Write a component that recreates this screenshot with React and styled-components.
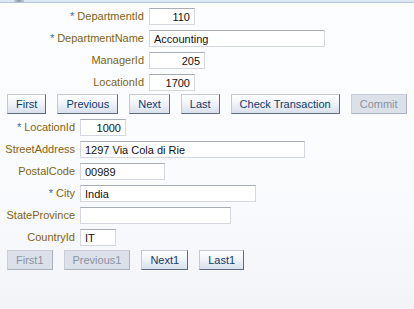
import React from 'react'
import styled, { createGlobalStyle } from 'styled-components'

const Global = createGlobalStyle`
  html, body {
    margin: 0;
    padding: 0;
  }
  body {
    width: 414px;
    height: 309px;
    overflow: hidden;
    background: linear-gradient(#fcfdfe 0%, #fafbfd 60%, #f2f4f8 100%);
    font-family: "Liberation Sans", Arial, sans-serif;
    font-size: 11px;
  }
`

const Page = styled.div`
  display: flex;
  flex-direction: column;
  height: 309px;
`

const TopBar = styled.div`
  display: flex;
  height: 2px;
  background: #dde7f4;
  border-bottom: 1px solid #b4c5dd;
`

const TopTab = styled.span`
  margin-left: 14px;
  width: 10px;
  height: 2px;
  background: linear-gradient(90deg, #c5ccd6, #8d97a5, #c5ccd6);
`

const Form = styled.div`
  display: grid;
  grid-template-columns: ${({ $labelWidth }) => $labelWidth}px auto;
  column-gap: 5px;
  row-gap: 5px;
  margin-top: 5px;
  justify-items: start;
  align-items: center;
`

const Label = styled.label`
  justify-self: end;
  color: #7f6412;
  white-space: nowrap;
  line-height: 17px;
`

const Req = styled.span`
  color: #3a68b0;
  margin-right: 3px;
`

const Field = styled.input`
  box-sizing: border-box;
  width: ${({ $w }) => $w}px;
  height: 17px;
  margin: 0;
  padding: 0 4px;
  border: 1px solid #d4d8de;
  border-top-color: #a7adb6;
  background: #fff;
  color: #111;
  font-family: "Liberation Sans", Arial, sans-serif;
  font-size: 11px;
  text-align: ${({ $num }) => ($num ? 'right' : 'left')};
  outline: none;
`

const Buttons = styled.div`
  display: flex;
  gap: 11px;
  padding-left: 7px;
  margin-top: ${({ $top }) => $top}px;
`

const Button = styled.button`
  box-sizing: border-box;
  height: 20px;
  margin: 0;
  padding: 0 8px;
  font-family: "Liberation Sans", Arial, sans-serif;
  font-size: 11px;
  color: #0f3a6c;
  background: linear-gradient(#ffffff 0%, #f1f4f9 45%, #d9e0ec 100%);
  border: 1px solid #c3cad5;
  border-right-color: #5f6b7c;
  border-bottom-color: #5f6b7c;
  cursor: pointer;

  &:disabled {
    color: #8893a4;
    background: #dce0e9;
    border-color: #c9ced8;
    border-right-color: #a9b1be;
    border-bottom-color: #a9b1be;
    cursor: default;
  }
`

const deptRows = [
  { label: 'DepartmentId', req: true, value: '110', w: 46, num: true },
  { label: 'DepartmentName', req: true, value: 'Accounting', w: 176 },
  { label: 'ManagerId', value: '205', w: 56, num: true },
  { label: 'LocationId', value: '1700', w: 46, num: true },
]

const locRows = [
  { label: 'LocationId', req: true, value: '1000', w: 46, num: true },
  { label: 'StreetAddress', value: '1297 Via Cola di Rie', w: 225 },
  { label: 'PostalCode', value: '00989', w: 85 },
  { label: 'City', req: true, value: 'India', w: 176 },
  { label: 'StateProvince', value: '', w: 151 },
  { label: 'CountryId', value: 'IT', w: 36 },
]

const FormRows = ({ rows, labelWidth }) => (
  <Form $labelWidth={labelWidth}>
    {rows.map((r) => (
      <React.Fragment key={r.label}>
        <Label>
          {r.req && <Req>*</Req>}
          {r.label}
        </Label>
        <Field $w={r.w} $num={r.num} defaultValue={r.value} />
      </React.Fragment>
    ))}
  </Form>
)

const App = () => {
  return (
    <Page>
      <Global />
      <TopBar>
        <TopTab />
      </TopBar>

      <FormRows rows={deptRows} labelWidth={144} />

      <Buttons $top={3}>
        <Button>First</Button>
        <Button>Previous</Button>
        <Button>Next</Button>
        <Button>Last</Button>
        <Button>Check Transaction</Button>
        <Button disabled>Commit</Button>
      </Buttons>

      <FormRows rows={locRows} labelWidth={75} />

      <Buttons $top={4}>
        <Button disabled>First1</Button>
        <Button disabled>Previous1</Button>
        <Button>Next1</Button>
        <Button>Last1</Button>
      </Buttons>
    </Page>
  )
}

export default App
